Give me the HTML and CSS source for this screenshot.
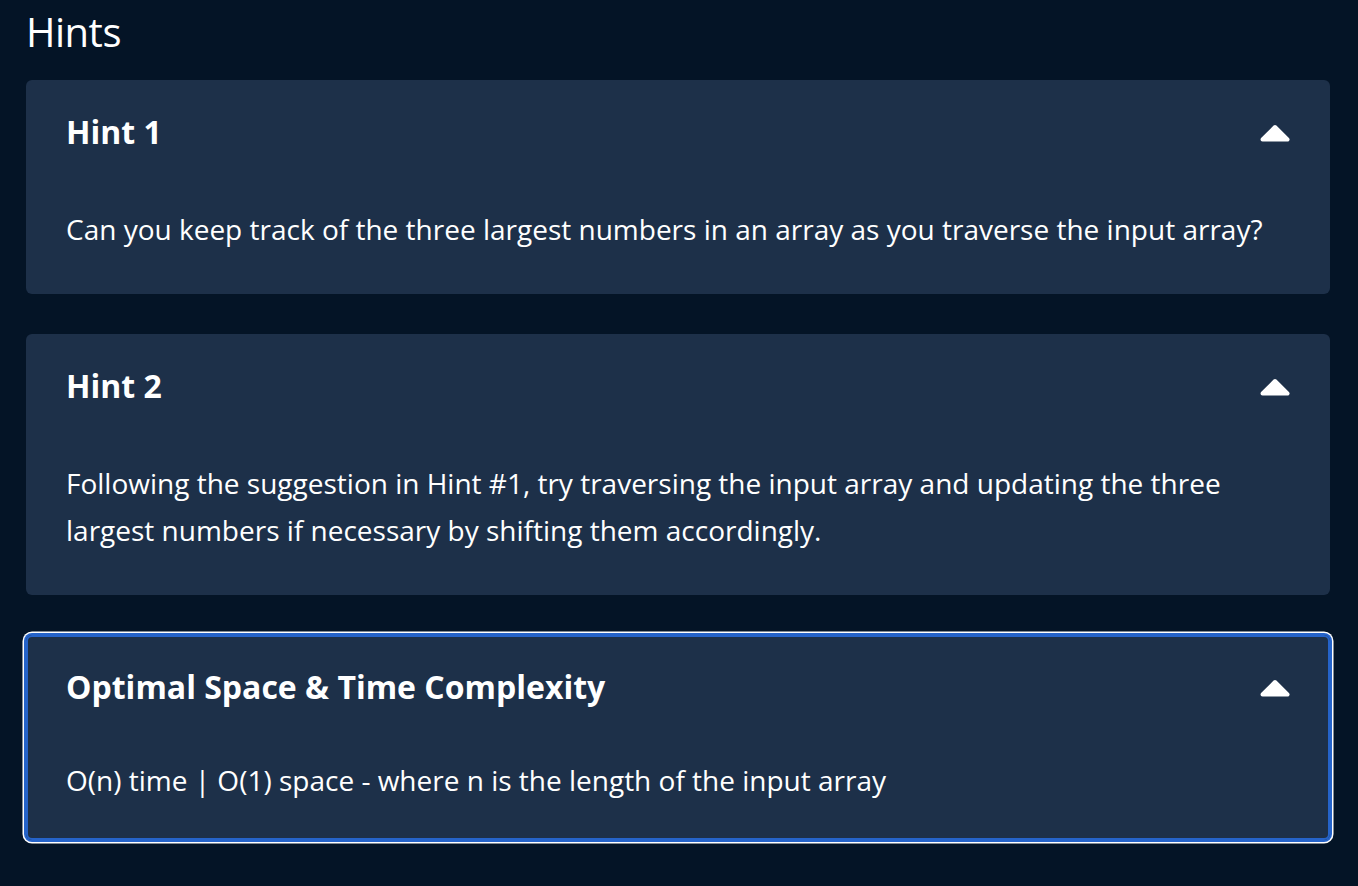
FILE: index.html
```html
<!DOCTYPE html>
<html lang="en">
<head>
<meta charset="utf-8">
<title>Hints</title>
<link rel="stylesheet" href="styles.css">
</head>
<body>
<main class="page">
  <h1 class="title">Hints</h1>
  <section class="card">
    <div class="card-header">
      <h2 class="card-title">Hint 1</h2>
      <svg class="caret" width="30" height="18" viewBox="0 0 30 18" aria-hidden="true"><path d="M2.5 15.5 L15 3 L27.5 15.5 Z" fill="#fff" stroke="#fff" stroke-width="4" stroke-linejoin="round"/></svg>
    </div>
    <p class="card-body">Can you keep track of the three largest numbers in an array as you traverse the input array?</p>
  </section>
  <section class="card">
    <div class="card-header">
      <h2 class="card-title">Hint 2</h2>
      <svg class="caret" width="30" height="18" viewBox="0 0 30 18" aria-hidden="true"><path d="M2.5 15.5 L15 3 L27.5 15.5 Z" fill="#fff" stroke="#fff" stroke-width="4" stroke-linejoin="round"/></svg>
    </div>
    <p class="card-body">Following the suggestion in Hint #1, try traversing the input array and updating the three largest numbers if necessary by shifting them accordingly.</p>
  </section>
  <section class="card card--focused">
    <div class="card-header">
      <h2 class="card-title">Optimal Space &amp; Time Complexity</h2>
      <svg class="caret" width="30" height="18" viewBox="0 0 30 18" aria-hidden="true"><path d="M2.5 15.5 L15 3 L27.5 15.5 Z" fill="#fff" stroke="#fff" stroke-width="4" stroke-linejoin="round"/></svg>
    </div>
    <p class="card-body">O(n) time | O(1) space - where n is the length of the input array</p>
  </section>
</main>
</body>
</html>
```

FILE: styles.css
```css
html, body {
  margin: 0;
  padding: 0;
  background: #041426;
}

body {
  font-family: "Open Sans", "Noto Sans", sans-serif;
  color: #ffffff;
}

.page {
  padding: 10px 28px 40px 26px;
  display: flex;
  flex-direction: column;
  gap: 40px;
}

.title {
  margin: 0 0 -14px 0;
  font-size: 40px;
  font-weight: 400;
  line-height: 44px;
  letter-spacing: -0.5px;
}

.card {
  background: #1d3049;
  border-radius: 6px;
  padding: 32px 40px 41px 40px;
}

.card--focused {
  box-shadow: inset 0 0 0 2px #2563c9, 0 0 0 2px #2563c9, 0 0 0 3.5px #ffffff;
  padding-bottom: 36px;
}

.card-header {
  display: flex;
  align-items: center;
  justify-content: space-between;
  height: 40px;
}

.card-title {
  margin: 0;
  font-size: 32px;
  font-weight: 700;
  line-height: 40px;
}

.caret {
  display: block;
  margin-top: 1px;
}

.card-body {
  margin: 54px 0 0 0;
  font-size: 28px;
  line-height: 47px;
  font-weight: 400;
}

.card--focused .card-body {
  margin-top: 50px;
}
```
